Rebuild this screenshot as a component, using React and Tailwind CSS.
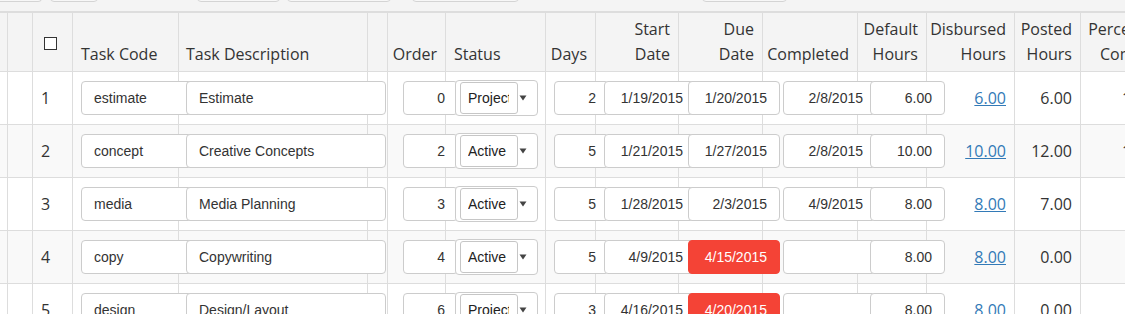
import React from 'react';

const sans = "font-['Open_Sans',sans-serif]";
const arial = "font-['Liberation_Sans',Arial,sans-serif]";

const rows = [
  { n: 1, code: 'estimate', desc: 'Estimate', order: '0', status: 'Project', days: '2', start: '1/19/2015', due: '1/20/2015', done: '2/8/2015', def: '6.00', disb: '6.00', posted: '6.00', pct: '100.00' },
  { n: 2, code: 'concept', desc: 'Creative Concepts', order: '2', status: 'Active', days: '5', start: '1/21/2015', due: '1/27/2015', done: '2/8/2015', def: '10.00', disb: '10.00', posted: '12.00', pct: '120.00' },
  { n: 3, code: 'media', desc: 'Media Planning', order: '3', status: 'Active', days: '5', start: '1/28/2015', due: '2/3/2015', done: '4/9/2015', def: '8.00', disb: '8.00', posted: '7.00', pct: '87.50' },
  { n: 4, code: 'copy', desc: 'Copywriting', order: '4', status: 'Active', days: '5', start: '4/9/2015', due: '4/15/2015', late: true, done: '', def: '8.00', disb: '8.00', posted: '0.00', pct: '0.00' },
  { n: 5, code: 'design', desc: 'Design/Layout', order: '6', status: 'Project', days: '3', start: '4/16/2015', due: '4/20/2015', late: true, done: '', def: '8.00', disb: '8.00', posted: '0.00', pct: '0.00' },
];

const Cell = ({ w, className = '', children }) => (
  <div className={`${w} shrink-0 h-full border-r border-[#ddd] flex items-center ${className}`}>
    {children}
  </div>
);

const Input = ({ value, className = '', right }) => (
  <div
    className={`shrink-0 h-[34px] border rounded px-3 flex items-center text-[14px] ${arial} ${
      right ? 'justify-end' : ''
    } ${className}`}
  >
    <span className="whitespace-nowrap">{value}</span>
  </div>
);

const Head = ({ w, right, lines = [], className = '' }) => (
  <div
    className={`${w} shrink-0 h-full border-r border-[#ddd] flex flex-col justify-end pb-[4px] leading-[25px] ${
      right ? 'text-right pr-2' : 'text-left pl-2'
    } ${className}`}
  >
    {lines.map((l, i) => (
      <div key={i} className="whitespace-nowrap">{l}</div>
    ))}
  </div>
);

const SelectBox = ({ value }) => (
  <div className="ml-[9px] shrink-0 w-[83px] h-[36px] border border-[#ccc] rounded bg-white flex items-center">
    <div className={`ml-[4px] w-[58px] h-[32px] border border-[#c6c6c6] rounded-[3px] pl-[7px] flex items-center text-[14px] text-[#222] ${arial}`}>
      <span className="block w-[41px] overflow-hidden whitespace-nowrap">{value}</span>
    </div>
    <svg className="ml-[1px]" width="8" height="6" viewBox="0 0 8 6">
      <polygon points="0.5,0.5 7.5,0.5 4,5.5" fill="#444" />
    </svg>
  </div>
);

const field = 'bg-white border-[#ccc] text-[#333]';

export default function App() {
  return (
    <div className={`w-[1125px] h-[314px] overflow-hidden bg-white text-[#333] text-[16px] ${sans}`}>
      {/* toolbar tail */}
      <div className="h-[11px] bg-[#f4f4f4] flex items-end pb-[9px] overflow-hidden">
        <div className="shrink-0 w-[42px] h-[20px] border border-[#d4d4d4] border-l-0 rounded-r bg-[#f7f7f7]" />
        <div className="shrink-0 ml-[8px] w-[48px] h-[20px] border border-[#d4d4d4] rounded bg-[#f7f7f7]" />
        <div className="shrink-0 ml-[99px] w-[83px] h-[20px] border border-[#d4d4d4] rounded bg-[#f7f7f7]" />
        <div className="shrink-0 ml-[7px] w-[104px] h-[20px] border border-[#d4d4d4] rounded bg-[#f7f7f7]" />
        <div className="shrink-0 ml-[21px] w-[107px] h-[20px] border border-[#d4d4d4] rounded bg-[#f7f7f7]" />
        <div className="shrink-0 ml-[183px] w-[85px] h-[20px] border border-[#d4d4d4] rounded bg-[#f7f7f7]" />
      </div>

      {/* header */}
      <div className="w-max h-[61px] flex bg-[#f4f4f4] border-t-2 border-b border-[#ddd]">
        <div className="w-[8px] shrink-0 h-full border-r border-[#ddd]" />
        <div className="w-[25px] shrink-0 h-full border-r border-[#ddd]" />
        <div className="w-[40px] shrink-0 h-full border-r border-[#ddd] flex items-end pb-[21px] pl-[11px]">
          <div className="w-[13px] h-[13px] border border-[#333] bg-white" />
        </div>
        <Head w="w-[106px]" lines={['Task Code']} />
        <Head w="w-[189px]" lines={['Task Description']} className="pl-[7px]" />
        <div className="w-[20px] shrink-0 h-full border-r border-[#ddd]" />
        <Head w="w-[58px]" right lines={['Order']} />
        <Head w="w-[100px]" lines={['Status']} />
        <Head w="w-[50px]" right lines={['Days']} />
        <Head w="w-[83px]" right lines={['Start', 'Date']} />
        <Head w="w-[84px]" right lines={['Due', 'Date']} />
        <Head w="w-[95px]" right lines={['Completed']} />
        <Head w="w-[69px]" right lines={['Default', 'Hours']} />
        <Head w="w-[88px]" right lines={['Disbursed', 'Hours']} />
        <Head w="w-[66px]" right lines={['Posted', 'Hours']} />
        <Head w="w-[100px]" right lines={['Percentage', 'Complete']} />
      </div>

      {/* body */}
      {rows.map((r, i) => (
        <div
          key={r.n}
          className={`w-max h-[53px] flex border-b border-[#ddd] ${i % 2 === 1 ? 'bg-[#f9f9f9]' : 'bg-white'}`}
        >
          <Cell w="w-[8px]" />
          <Cell w="w-[25px]" />
          <Cell w="w-[40px]" className="pl-2">{r.n}</Cell>
          <Cell w="w-[106px]">
            <Input value={r.code} className={`ml-2 w-[115px] ${field}`} />
          </Cell>
          <Cell w="w-[189px]">
            <Input value={r.desc} className={`ml-[7px] w-[200px] ${field}`} />
          </Cell>
          <Cell w="w-[20px]" />
          <Cell w="w-[58px]">
            <Input value={r.order} right className={`ml-[15px] w-[55px] ${field}`} />
          </Cell>
          <Cell w="w-[100px]">
            <SelectBox value={r.status} />
          </Cell>
          <Cell w="w-[50px]">
            <Input value={r.days} right className={`ml-2 w-[55px] ${field}`} />
          </Cell>
          <Cell w="w-[83px]">
            <Input value={r.start} right className={`ml-2 w-[92px] ${field}`} />
          </Cell>
          <Cell w="w-[84px]">
            <Input
              value={r.due}
              right
              className={
                r.late
                  ? 'ml-[9px] w-[92px] bg-[#f44336] border-[#f44336] text-white'
                  : `ml-[9px] w-[92px] ${field}`
              }
            />
          </Cell>
          <Cell w="w-[95px]">
            <Input value={r.done} right className={`ml-[20px] w-[93px] ${field}`} />
          </Cell>
          <Cell w="w-[69px]">
            <Input value={r.def} right className={`ml-[12px] w-[75px] ${field}`} />
          </Cell>
          <Cell w="w-[88px]" className="justify-end pr-2">
            <a href="#" className="text-[#337ab7] underline">{r.disb}</a>
          </Cell>
          <Cell w="w-[66px]" className="justify-end pr-2">{r.posted}</Cell>
          <Cell w="w-[100px]" className="justify-end pr-2">{r.pct}</Cell>
        </div>
      ))}
    </div>
  );
}
